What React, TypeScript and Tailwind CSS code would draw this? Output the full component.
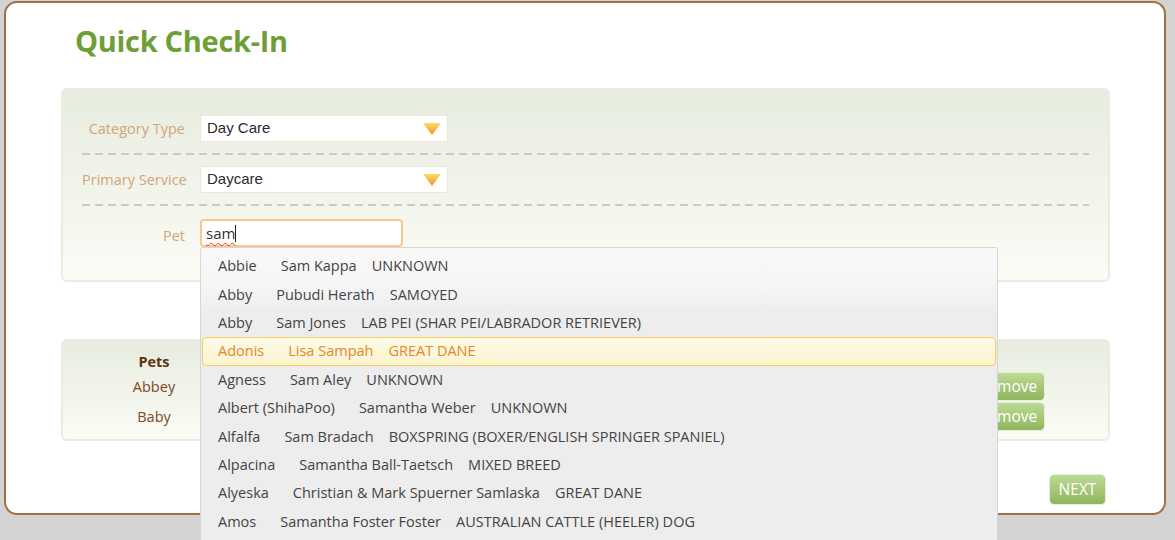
import React from "react";

const items: [string, string, string][] = [
  ["Abbie", "Sam Kappa", "UNKNOWN"],
  ["Abby", "Pubudi Herath", "SAMOYED"],
  ["Abby", "Sam Jones", "LAB PEI (SHAR PEI/LABRADOR RETRIEVER)"],
  ["Adonis", "Lisa Sampah", "GREAT DANE"],
  ["Agness", "Sam Aley", "UNKNOWN"],
  ["Albert (ShihaPoo)", "Samantha Weber", "UNKNOWN"],
  ["Alfalfa", "Sam Bradach", "BOXSPRING (BOXER/ENGLISH SPRINGER SPANIEL)"],
  ["Alpacina", "Samantha Ball-Taetsch", "MIXED BREED"],
  ["Alyeska", "Christian & Mark Spuerner Samlaska", "GREAT DANE"],
  ["Amos", "Samantha Foster Foster", "AUSTRALIAN CATTLE (HEELER) DOG"],
];

function Arrow() {
  return (
    <svg width="18" height="12" viewBox="0 0 18 12" className="shrink-0">
      <defs>
        <linearGradient id="ag" x1="0" y1="0" x2="0" y2="1">
          <stop offset="0" stopColor="#ffdc66" />
          <stop offset="1" stopColor="#f0922c" />
        </linearGradient>
      </defs>
      <polygon points="0,0 18,0 9,12" fill="url(#ag)" />
    </svg>
  );
}

function SelectBox({ value }: { value: string }) {
  return (
    <div className="w-[248px] h-[27px] bg-white border border-[#f1e3d7] rounded-[2px] flex items-center justify-between pl-[6px] pr-[6px]">
      <span className="text-[15px] text-[#2b2b2b] font-['Liberation_Sans',Arial,sans-serif]">{value}</span>
      <Arrow />
    </div>
  );
}

function Dashed() {
  return <div className="h-[2px] w-full bg-[repeating-linear-gradient(90deg,#cdcabf_0_8px,transparent_8px_13px)]" />;
}

function GreenBtn({ children, className }: { children: React.ReactNode; className?: string }) {
  return (
    <div
      className={
        "flex items-center justify-center rounded-[5px] border border-[#e6efd9] bg-[linear-gradient(#bcdb95,#8fb55d)] text-white text-[15.5px] " +
        (className ?? "")
      }
    >
      {children}
    </div>
  );
}

export default function App() {
  return (
    <div className="w-[1175px] h-[540px] bg-[#d3d3d3] overflow-hidden pt-px pl-[4px] font-['Open_Sans','Noto_Sans',sans-serif]">
      <div className="relative w-[1162px] h-[514px] bg-white border-2 border-[#a2703f] rounded-[13px] pl-[55px] pr-[54px]">
        <h1 className="pl-[14px] pt-[19px] h-[85px] text-[29px] font-bold text-[#6e9f36] leading-[38px] tracking-[-0.3px]">
          Quick Check-In
        </h1>

        {/* Form panel */}
        <div className="h-[194px] border-2 border-[#f1e9df] rounded-[6px] bg-[linear-gradient(#e7ecdf,#fbfcf6)] px-[19px] pt-[25px]">
          <div className="flex items-center">
            <div className="w-[103px] shrink-0 whitespace-nowrap text-right text-[14.5px] text-[#d2a578]">Category Type</div>
            <div className="ml-[15px]">
              <SelectBox value="Day Care" />
            </div>
          </div>
          <div className="mt-[11px]">
            <Dashed />
          </div>
          <div className="flex items-center mt-[11px]">
            <div className="w-[103px] shrink-0 whitespace-nowrap text-right text-[14.5px] text-[#d2a578]">Primary Service</div>
            <div className="ml-[15px]">
              <SelectBox value="Daycare" />
            </div>
          </div>
          <div className="mt-[11px]">
            <Dashed />
          </div>
          <div className="flex items-start mt-[13px]">
            <div className="w-[103px] shrink-0 whitespace-nowrap text-right text-[14.5px] text-[#d2a578] pt-[6px]">Pet</div>
            <div className="ml-[15px] relative">
              <div className="w-[203px] h-[28px] bg-white border-2 border-[#f9c88d] rounded-[4px] flex items-center pl-[4px]">
                <span className="text-[15px] text-[#333] underline decoration-wavy decoration-[#e33] decoration-1 underline-offset-[3px]">
                  sam
                </span>
                <span className="w-px h-[17px] bg-[#222]" />
              </div>

              {/* Autocomplete menu */}
              <div className="absolute left-0 top-[28px] z-10 w-[798px] h-[300px] border border-[#d6d6d6] rounded-t-[3px] bg-[linear-gradient(#f9f9f9_0px,#f5f5f5_40px,#ededed_65px,#ededed_100%)] pt-[4px] px-px">
                {items.map(([pet, owner, breed], i) => {
                  const hl = i === 3;
                  return (
                    <div
                      key={i}
                      className={
                        "h-[28.4px] flex items-center pl-[15px] text-[14.5px] whitespace-nowrap rounded-[4px] border " +
                        (hl
                          ? "border-[#f5ce5c] bg-[linear-gradient(#fdfae6,#fbf3cf)] text-[#df8a2e]"
                          : "border-transparent text-[#444]")
                      }
                    >
                      <span>{pet}</span>
                      <span className="ml-[24px]">{owner}</span>
                      <span className="ml-[15px]">{breed}</span>
                    </div>
                  );
                })}
              </div>
            </div>
          </div>
        </div>

        {/* Pets panel */}
        <div className="mt-[57px] h-[102px] border-2 border-[#f1e9df] rounded-[6px] bg-[linear-gradient(#e7ecdf,#fbfcf6)] pt-[10px] pl-[16px] pr-[63px]">
          <div className="flex h-[21px] items-center">
            <div className="w-[150px] text-center text-[14.5px] font-bold text-[#5b3412]">Pets</div>
          </div>
          {["Abbey", "Baby"].map((n) => (
            <div key={n} className="flex h-[30px] items-start justify-between">
              <div className="w-[150px] h-[30px] flex items-center justify-center text-[14.5px] text-[#7a4b1f]">{n}</div>
              <GreenBtn className="w-[74px] h-[29px]">Remove</GreenBtn>
            </div>
          ))}
        </div>

        <div className="flex justify-end mt-[33px] pr-[4px]">
          <GreenBtn className="w-[57px] h-[31px]">NEXT</GreenBtn>
        </div>
      </div>
    </div>
  );
}
